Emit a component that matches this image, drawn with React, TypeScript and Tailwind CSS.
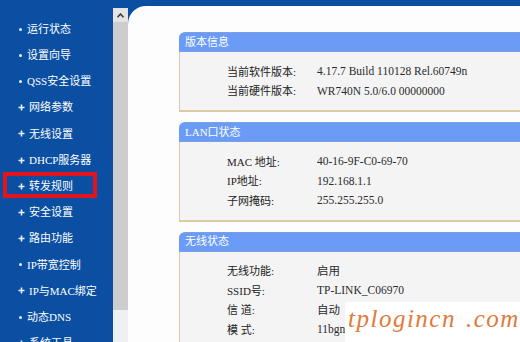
const menu: { label: string; plus: boolean }[] = [
  { label: "运行状态", plus: false },
  { label: "设置向导", plus: false },
  { label: "QSS安全设置", plus: false },
  { label: "网络参数", plus: true },
  { label: "无线设置", plus: true },
  { label: "DHCP服务器", plus: true },
  { label: "转发规则", plus: true },
  { label: "安全设置", plus: true },
  { label: "路由功能", plus: true },
  { label: "IP带宽控制", plus: false },
  { label: "IP与MAC绑定", plus: true },
  { label: "动态DNS", plus: false },
  { label: "系统工具", plus: true },
];

const panels: { title: string; rows: [string, string][] }[] = [
  {
    title: "版本信息",
    rows: [
      ["当前软件版本:", "4.17.7 Build 110128 Rel.60749n"],
      ["当前硬件版本:", "WR740N 5.0/6.0 00000000"],
    ],
  },
  {
    title: "LAN口状态",
    rows: [
      ["MAC 地址:", "40-16-9F-C0-69-70"],
      ["IP地址:", "192.168.1.1"],
      ["子网掩码:", "255.255.255.0"],
    ],
  },
  {
    title: "无线状态",
    rows: [
      ["无线功能:", "启用"],
      ["SSID号:", "TP-LINK_C06970"],
      ["信 道:", "自动（当前信道 6）"],
      ["模 式:", "11bgn mixed"],
      ["频段带宽:", "自动"],
    ],
  },
];

const font = "font-['Liberation_Serif','Noto_Sans_CJK_SC',serif]";

function Bullet({ plus }: { plus: boolean }) {
  if (plus) {
    return (
      <svg width="7" height="7" viewBox="0 0 7 7" className="mr-[4px] shrink-0">
        <path d="M3.5 0.5v6M0.5 3.5h6" stroke="#e8f0ff" strokeWidth="1.6" />
      </svg>
    );
  }
  return <span className="mr-[5px] ml-[1px] size-[3px] shrink-0 rounded-full bg-[#e8f0ff]" />;
}

export default function App() {
  return (
    <div className={`relative flex h-[342px] w-[520px] overflow-hidden bg-[#0b4fa3] ${font}`}>
      <nav className="w-[113px] shrink-0 pt-[16px]">
        {menu.map((m) => (
          <div key={m.label} className="relative flex h-[26.2px] items-center pl-[18px] text-[11px] text-white">
            <Bullet plus={m.plus} />
            <span>{m.label}</span>
            {m.label === "转发规则" && (
              <span className="absolute top-[-1px] bottom-[1px] left-[3px] right-[16px] border-4 border-[#e3141c]" />
            )}
          </div>
        ))}
      </nav>

      <div className="mt-[8px] flex w-[15px] shrink-0 flex-col">
        <div className="flex h-[14px] items-center justify-center bg-[#e4e4e4]">
          <svg width="7" height="5" viewBox="0 0 7 5">
            <path d="M0.5 4.2L3.5 1L6.5 4.2" fill="none" stroke="#333" strokeWidth="1.5" />
          </svg>
        </div>
        <div className="h-[288px] bg-[#cdcdcd]" />
        <div className="flex-1 bg-[#eef0f2]" />
      </div>

      <main className="mt-[6px] flex-1 rounded-tl-[18px] bg-[#fdfdfd] pt-[26px] pl-[51px]">
        <div className="flex w-[380px] flex-col gap-[10px]">
          {panels.map((p) => (
            <section key={p.title}>
              <div className="flex h-[20px] items-center rounded-tl-[6px] border-y border-[#7d9fe3] bg-[#6a9bf6] pl-[6px] text-[11px] text-white">
                {p.title}
              </div>
              <div className="border-l border-b-2 border-[#dccba3] bg-[#f4f4f4] pt-[10px] pb-[9px]">
                {p.rows.map(([k, v]) => (
                  <div key={k} className="flex h-[19.5px] items-center text-[11px] text-[#222]">
                    <span className="w-[137px] shrink-0 pl-[47px]">{k}</span>
                    <span className="text-[11.5px] text-[#2a2a2a]">{v}</span>
                  </div>
                ))}
              </div>
            </section>
          ))}
        </div>
      </main>

      <div className="absolute top-[302px] left-[345px] right-0 bottom-0 bg-white pl-[3px] pt-[2px] font-['Liberation_Serif',serif] text-[25px] leading-[30px] italic tracking-[1.5px] text-[#e27a3a]">
        tplogincn<span className="ml-[10px]">.com</span>
      </div>
    </div>
  );
}
